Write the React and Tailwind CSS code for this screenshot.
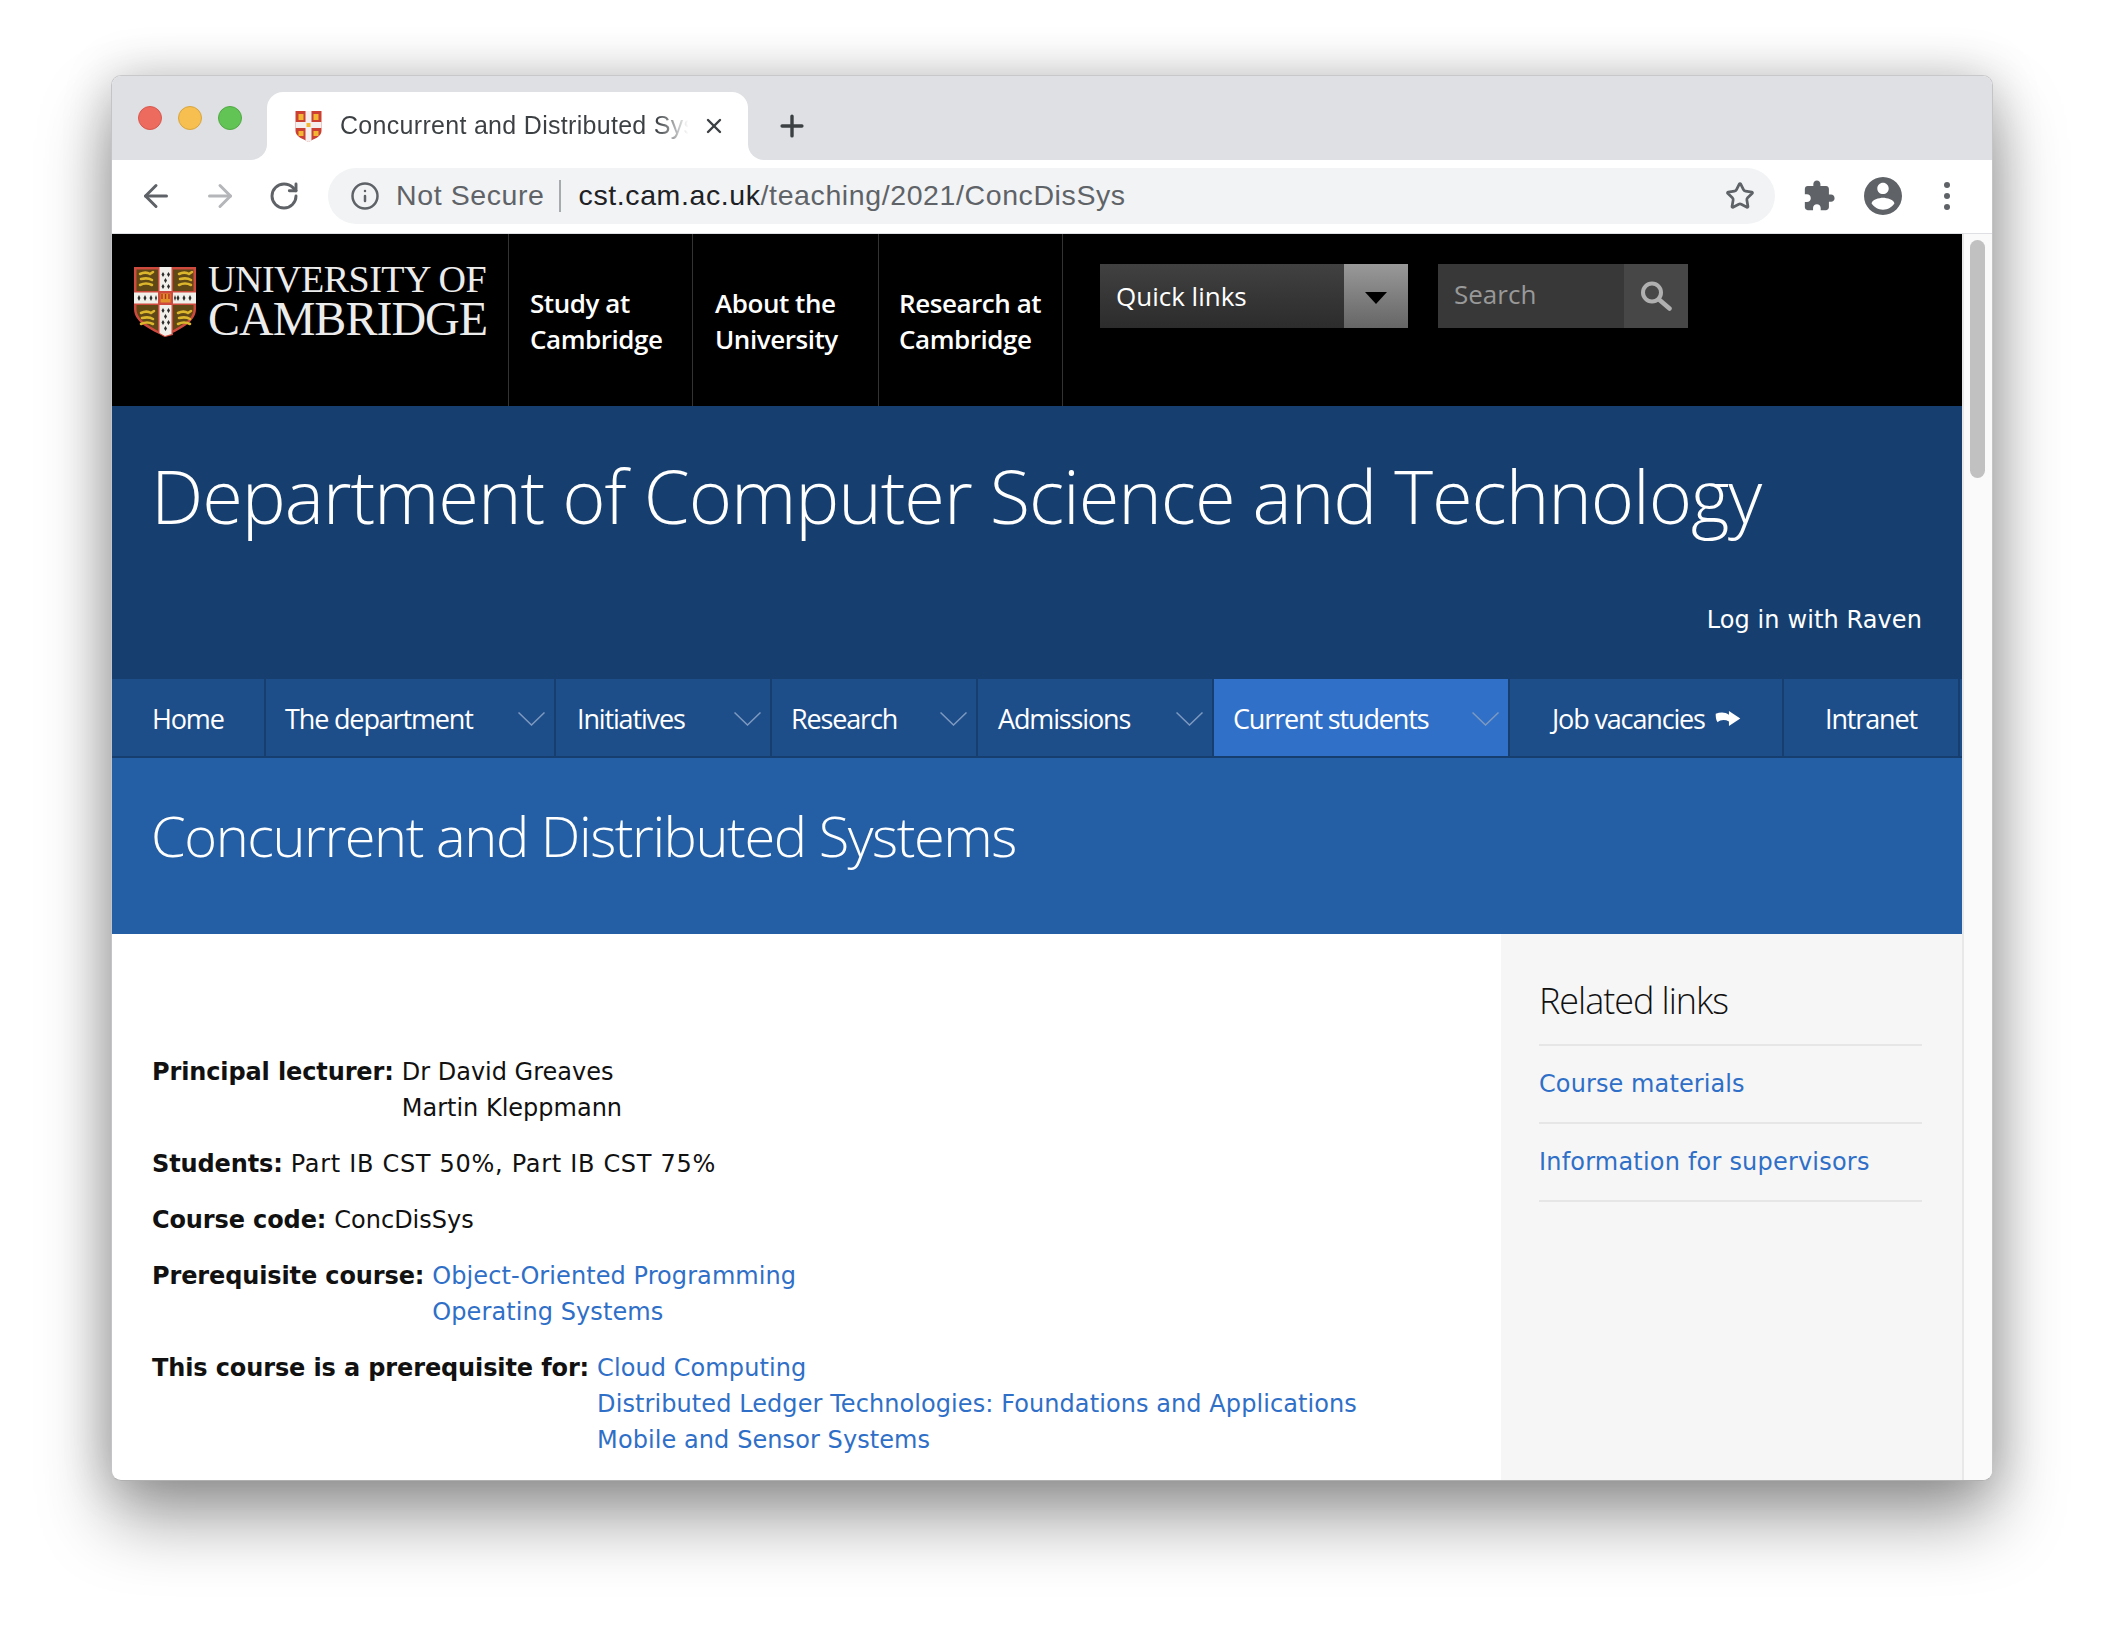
import React from 'react';
import { ArrowLeft, ArrowRight, RotateCw, Info, Star, Plus, X } from 'lucide-react';

const navItems = [
  { label: 'Home', width: 'w-[154px]', pad: 'pl-[40px]' },
  { label: 'The department', width: 'w-[290px]', pad: 'pl-[19px]', chevron: true },
  { label: 'Initiatives', width: 'w-[216px]', pad: 'pl-[21px]', chevron: true },
  { label: 'Research', width: 'w-[206px]', pad: 'pl-[19px]', chevron: true },
  { label: 'Admissions', width: 'w-[236px]', pad: 'pl-[20px]', chevron: true },
  { label: 'Current students', width: 'w-[296px]', pad: 'pl-[19px]', chevron: true, active: true },
  { label: 'Job vacancies', width: 'w-[274px]', pad: 'pl-[42px]', external: true },
  { label: 'Intranet', width: 'w-[176px]', pad: 'pl-[41px]' },
];

const topLinks = [
  { lines: ['Study at', 'Cambridge'], width: 'w-[184px]', pad: 'pl-[21px]' },
  { lines: ['About the', 'University'], width: 'w-[186px]', pad: 'pl-[22px]' },
  { lines: ['Research at', 'Cambridge'], width: 'w-[184px]', pad: 'pl-[20px]' },
];

// one lion, reused in each quarter of the arms
const lion = 'M3 5c4-2 7-2 10 0l3-2M4 10c4-1 8-1 11 1M3 16c4-2 8-2 12 0';

const Shield = ({ className }) => (
  <svg viewBox="0 0 62 70" className={className}>
    <path d="M0 0H62V42C62 56 44 63 31 70C18 63 0 56 0 42Z" fill="#cf4a3e" />
    <path d="M2.5 2.5H59.5V42C59.5 54 43 61 31 67.500C19 61 2.500 54 2.500 42Z" fill="#5f4716" />
    <path d="M24 0H39V68L31 70L24 66ZM0 24H62V38H0Z" fill="#cf4a3e" />
    <path d="M25.500 0H37.500V67L31 69L25.500 66ZM0 25.500H62V36.500H0Z" fill="#f1efe9" />
    <path d="M24 24H39V38H24Z" fill="#cf4a3e" />
    <path d="M26.500 26.500H36.500V35.500H26.500Z" fill="#e0912a" />
    <path d="M28 27v5M31.500 27v5M35 27v5" stroke="#b53222" strokeWidth="1.4" />
    <g fill="#2c2c2c">
      <path d="M29 5l1.500 2.500-1.500 2.500-1.500-2.500ZM34.500 5l1.500 2.500-1.500 2.500-1.500-2.500ZM31.500 11l1.500 2.500-1.500 2.500-1.500-2.500ZM29 17l1.500 2.500-1.500 2.500-1.500-2.500ZM34.500 17l1.500 2.500-1.500 2.500-1.500-2.500Z" />
      <path d="M29 41l1.500 2.500-1.500 2.500-1.500-2.500ZM34.500 41l1.500 2.500-1.500 2.500-1.500-2.500ZM31.500 47l1.500 2.500-1.500 2.500-1.500-2.500ZM29 53l1.500 2.500-1.500 2.500-1.500-2.500ZM34.500 53l1.500 2.500-1.500 2.500-1.500-2.500ZM31.500 59l1.500 2.500-1.500 2.500-1.500-2.500Z" />
      <path d="M5 28l1.500 3-1.500 3-1.500-3ZM11 28l1.500 3-1.500 3-1.500-3ZM17 28l1.500 3-1.500 3-1.500-3ZM22 28l1 3-1 3-1-3ZM44 28l1.500 3-1.500 3-1.500-3ZM50 28l1.500 3-1.500 3-1.500-3ZM56 28l1.500 3-1.500 3-1.500-3ZM41 28l1 3-1 3-1-3Z" />
    </g>
    <g fill="none" stroke="#dcb62c" strokeWidth="2.600" strokeLinecap="round">
      <path d={lion} transform="translate(3 2)" />
      <path d={lion} transform="translate(42 2)" />
      <path d={lion} transform="translate(4 41)" />
      <path d={lion} transform="translate(41 41)" />
    </g>
  </svg>
);

const Favicon = () => (
  <svg viewBox="0 0 26 31" className="h-[31px] w-[27px] shrink-0">
    <path d="M0 0H26V20C26 26 18 28 13 31C8 28 0 26 0 20Z" fill="#cc3f33" />
    <path d="M10 0H16V30L13 31L10 30ZM0 11H26V17H0Z" fill="#f4efee" />
    <path d="M3 3H8V9H3ZM18 3H23V9H18ZM3 20H8V25H3ZM18 20H23V25H18ZM11 12H15V16H11Z" fill="#f2b632" />
  </svg>
);

const ChevronOutline = () => (
  <svg viewBox="0 0 27 14" className="h-[14px] w-[27px]" fill="none" stroke="#7d99bf" strokeWidth="1.5">
    <path d="M0.5 0.5L13.5 13L26.5 0.5" />
  </svg>
);

const Row = ({ label, children, className = 'mb-[20px]' }) => (
  <div className={`flex ${className}`}>
    <b className="mr-[8px] font-bold tracking-[-0.12px] whitespace-pre">{label}</b>
    <div>{children}</div>
  </div>
);

const Link = ({ children }) => <div className="tracking-[0.08px] text-[#2f6fc7]">{children}</div>;

export default function App() {
  return (
    <div className="h-[1628px] w-[2104px] overflow-hidden bg-white pl-[111px] pt-[75px]">
      <div className="flex h-[1406px] w-[1882px] flex-col overflow-hidden rounded-[10px] border border-t-[#c8c8ca] border-x-[#c4c4c6] border-b-[#b0b0b0] bg-white shadow-[0_38px_70px_rgba(0,0,0,0.38),0_0_50px_rgba(0,0,0,0.2)]">
        {/* tab strip */}
        <div className="flex h-[84px] shrink-0 bg-[#dfe0e4] font-['Liberation_Sans',sans-serif]">
          <div className="flex items-center gap-[16px] pl-[26px]">
            <span className="h-[24px] w-[24px] rounded-full border border-[#d8584f] bg-[#ec6a5e]" />
            <span className="h-[24px] w-[24px] rounded-full border border-[#d9a53e] bg-[#f6bf4f]" />
            <span className="h-[24px] w-[24px] rounded-full border border-[#52a945] bg-[#61c454]" />
          </div>
          <div className="relative ml-[25px] mt-[16px] flex h-[68px] w-[481px] items-center rounded-t-[16px] bg-white pl-[28px]">
            <span className="absolute -left-[16px] bottom-0 h-[16px] w-[16px] bg-white">
              <span className="block h-full w-full rounded-br-[16px] bg-[#dfe0e4]" />
            </span>
            <span className="absolute -right-[16px] bottom-0 h-[16px] w-[16px] bg-white">
              <span className="block h-full w-full rounded-bl-[16px] bg-[#dfe0e4]" />
            </span>
            <Favicon />
            <span className="ml-[18px] w-[352px] overflow-hidden whitespace-nowrap bg-gradient-to-r from-[#3c4043] from-[90%] to-transparent to-[99%] bg-clip-text text-[25px] tracking-[0.3px] text-transparent">
              Concurrent and Distributed Systems
            </span>
            <X className="ml-[10px] h-[24px] w-[24px] text-[#3c4043]" strokeWidth={2.4} />
          </div>
          <Plus className="ml-[27px] mt-[33px] h-[34px] w-[34px] text-[#3c4043]" strokeWidth={2.4} />
        </div>

        {/* toolbar */}
        <div className="flex h-[74px] shrink-0 items-center border-b border-[#dfe0e4] bg-white pb-[2px] font-['Liberation_Sans',sans-serif]">
          <ArrowLeft className="ml-[26px] h-[36px] w-[36px] text-[#5f6368]" strokeWidth={2} />
          <ArrowRight className="ml-[28px] h-[36px] w-[36px] text-[#b4b6b9]" strokeWidth={2} />
          <RotateCw className="ml-[30px] h-[32px] w-[32px] text-[#5f6368]" strokeWidth={2.2} />
          <div className="ml-[28px] flex h-[56px] w-[1447px] items-center rounded-full bg-[#f1f3f4] pl-[22px] text-[28.5px] tracking-[0.6px]">
            <Info className="h-[30px] w-[30px] text-[#5f6368]" strokeWidth={2} />
            <span className="ml-[16px] text-[#5f6368]">Not Secure</span>
            <span className="ml-[14px] h-[32px] w-[2px] bg-[#a8abae]" />
            <span className="ml-[18px] flex-1 text-[#202124]">
              cst.cam.ac.uk<span className="text-[#5f6368]">/teaching/2021/ConcDisSys</span>
            </span>
            <Star className="mr-[20px] h-[30px] w-[30px] text-[#5f6368]" strokeWidth={2.2} />
          </div>
          <svg viewBox="0 0 24 24" className="ml-[27px] h-[34px] w-[34px] fill-[#5f6368]">
            <path d="M20.5 11H19V7c0-1.1-.9-2-2-2h-4V3.5C13 2.12 11.88 1 10.5 1S8 2.12 8 3.5V5H4c-1.1 0-1.99.9-1.99 2v3.8H3.5c1.49 0 2.7 1.21 2.7 2.7s-1.21 2.7-2.7 2.7H2V20c0 1.1.9 2 2 2h3.8v-1.5c0-1.49 1.21-2.7 2.7-2.7 1.49 0 2.7 1.21 2.7 2.7V22H17c1.1 0 2-.9 2-2v-4h1.5c1.38 0 2.5-1.12 2.5-2.5S21.88 11 20.5 11z" />
          </svg>
          <svg viewBox="2 2 20 20" className="ml-[28px] h-[38px] w-[38px] fill-[#5f6368]">
            <path d="M12 2C6.48 2 2 6.48 2 12s4.48 10 10 10 10-4.48 10-10S17.52 2 12 2zm0 3c1.66 0 3 1.34 3 3s-1.34 3-3 3-3-1.34-3-3 1.34-3 3-3zm0 14.2c-2.5 0-4.71-1.28-6-3.22.03-1.99 4-3.08 6-3.08 1.99 0 5.97 1.09 6 3.08-1.29 1.94-3.5 3.22-6 3.22z" />
          </svg>
          <div className="ml-[42px] flex flex-col gap-[5px]">
            <span className="h-[6px] w-[6px] rounded-full bg-[#5f6368]" />
            <span className="h-[6px] w-[6px] rounded-full bg-[#5f6368]" />
            <span className="h-[6px] w-[6px] rounded-full bg-[#5f6368]" />
          </div>
        </div>

        {/* page + scrollbar */}
        <div className="flex min-h-0 flex-1">
          <div className="w-[1850px] shrink-0">
            {/* university bar */}
            <div className="flex h-[172px] bg-black font-['Open_Sans',sans-serif]">
              <div className="flex h-full w-[397px] border-r border-[#333] pl-[22px] pt-[33px]">
                <Shield className="h-[70px] w-[62px]" />
                <div className="ml-[12px] -mt-[6px] font-['Liberation_Serif',serif] text-[#ececec]">
                  <div className="text-[38px] leading-[36px] tracking-[-0.5px]">UNIVERSITY OF</div>
                  <div className="text-[48px] leading-[44px] tracking-[-1px]">CAMBRIDGE</div>
                </div>
              </div>
              {topLinks.map((link) => (
                <div key={link.lines[0]} className={`${link.width} ${link.pad} border-r border-[#333] pt-[51px] text-[26px] font-semibold leading-[36px] tracking-[-0.45px] text-white`}>
                  {link.lines.map((line) => (
                    <div key={line}>{line}</div>
                  ))}
                </div>
              ))}
              <div className="ml-[37px] mt-[30px] flex h-[64px] w-[308px] bg-gradient-to-b from-[#414141] to-[#2c2c2c]">
                <span className="flex-1 pl-[16px] pt-[14px] text-[26px] leading-[36px] text-white">Quick links</span>
                <span className="flex w-[64px] items-center justify-center bg-gradient-to-b from-[#999] to-[#666]">
                  <span className="mt-[4px] h-0 w-0 border-x-[11px] border-t-[12px] border-x-transparent border-t-black" />
                </span>
              </div>
              <div className="ml-[30px] mt-[30px] flex h-[64px] w-[250px] bg-[#383838]">
                <span className="flex-1 pl-[16px] pt-[12px] text-[26px] leading-[36px] text-[#999]">Search</span>
                <span className="flex w-[64px] items-center justify-center bg-[#474747]">
                  <svg viewBox="0 0 32 30" className="h-[30px] w-[32px]" fill="none" stroke="#b0b0b0" strokeLinecap="round">
                    <circle cx="12" cy="11.500" r="9" strokeWidth="4" />
                    <path d="M19 18.500L29.500 27.500" strokeWidth="4.500" />
                  </svg>
                </span>
              </div>
            </div>

            {/* department band */}
            <div className="h-[273px] bg-[#163f70] pl-[39px] pr-[40px] pt-[40px]">
              <h1 className="whitespace-nowrap font-['Open_Sans',sans-serif] text-[74px] font-light leading-[100px] tracking-[-1.1px] text-white">
                Department of Computer Science and Technology
              </h1>
              <div className="mt-[56px] text-right font-['DejaVu_Sans',sans-serif] text-[24px] leading-[36px] tracking-[0.1px] text-white">Log in with Raven</div>
            </div>

            {/* nav */}
            <div className="flex h-[79px] border-b-[2px] border-[#163f70] bg-[#1e4e8a] font-['Open_Sans',sans-serif] text-[27px] text-white">
              {navItems.map((item) => (
                <div
                  key={item.label}
                  className={`flex h-full items-center justify-between border-r-[2px] border-[#163f70] pr-[9px] pt-[3px] tracking-[-1.15px] ${item.width} ${item.pad} ${item.active ? 'bg-[#3070c8]' : ''}`}
                >
                  <span className="flex items-center">
                    {item.label}
                    {item.external && (
                      <svg viewBox="0 0 26 18" className="ml-[10px] h-[17px] w-[26px] fill-white">
                        <path d="M0 3C5 1 10 1 14 4V0L26 8L14 16V11C10 9 5 9 2 12C0 9 0 6 0 3Z" />
                      </svg>
                    )}
                  </span>
                  {item.chevron && <ChevronOutline />}
                </div>
              ))}
            </div>

            {/* course title */}
            <div className="h-[176px] bg-[#245fa6] pl-[39px] pt-[37px]">
              <h2 className="whitespace-nowrap font-['Open_Sans',sans-serif] text-[56px] font-light leading-[80px] tracking-[-1.45px] text-white">
                Concurrent and Distributed Systems
              </h2>
            </div>

            {/* content */}
            <div className="flex font-['DejaVu_Sans',sans-serif] text-[24px] leading-[36px]">
              <div className="w-[1389px] shrink-0 pl-[40px] pt-[120px] text-[#111]">
                <Row label="Principal lecturer:">
                  <div>Dr David Greaves</div>
                  <div>Martin Kleppmann</div>
                </Row>
                <Row label="Students:">
                  <span className="tracking-[0.7px]">Part IB CST 50%, Part IB CST 75%</span>
                </Row>
                <Row label="Course code:">ConcDisSys</Row>
                <Row label="Prerequisite course:">
                  <Link>Object-Oriented Programming</Link>
                  <Link>Operating Systems</Link>
                </Row>
                <Row label="This course is a prerequisite for:">
                  <Link>Cloud Computing</Link>
                  <Link>Distributed Ledger Technologies: Foundations and Applications</Link>
                  <Link>Mobile and Sensor Systems</Link>
                </Row>
              </div>
              <div className="h-[600px] flex-1 bg-[#f6f6f6] pl-[39px] pr-[40px] pt-[44px]">
                <h3 className="-ml-[1px] border-b-[2px] border-[#e6e6e6] pb-[20px] font-['Open_Sans',sans-serif] text-[36px] font-light leading-[46px] tracking-[-1.05px] text-[#111]">Related links</h3>
                <div className="-ml-[1px] border-b-[2px] border-[#e6e6e6] py-[20px] tracking-[0.1px] text-[#2f6fc7]">Course materials</div>
                <div className="-ml-[1px] border-b-[2px] border-[#e6e6e6] py-[20px] tracking-[0.2px] text-[#2f6fc7]">Information for supervisors</div>
              </div>
            </div>
          </div>

          {/* scrollbar */}
          <div className="flex-1 border-l-[2px] border-[#e8e8e8] bg-[#fafafa] pl-[6px] pt-[6px]">
            <div className="h-[238px] w-[15px] rounded-full bg-[#c1c1c1]" />
          </div>
        </div>
      </div>
    </div>
  );
}
